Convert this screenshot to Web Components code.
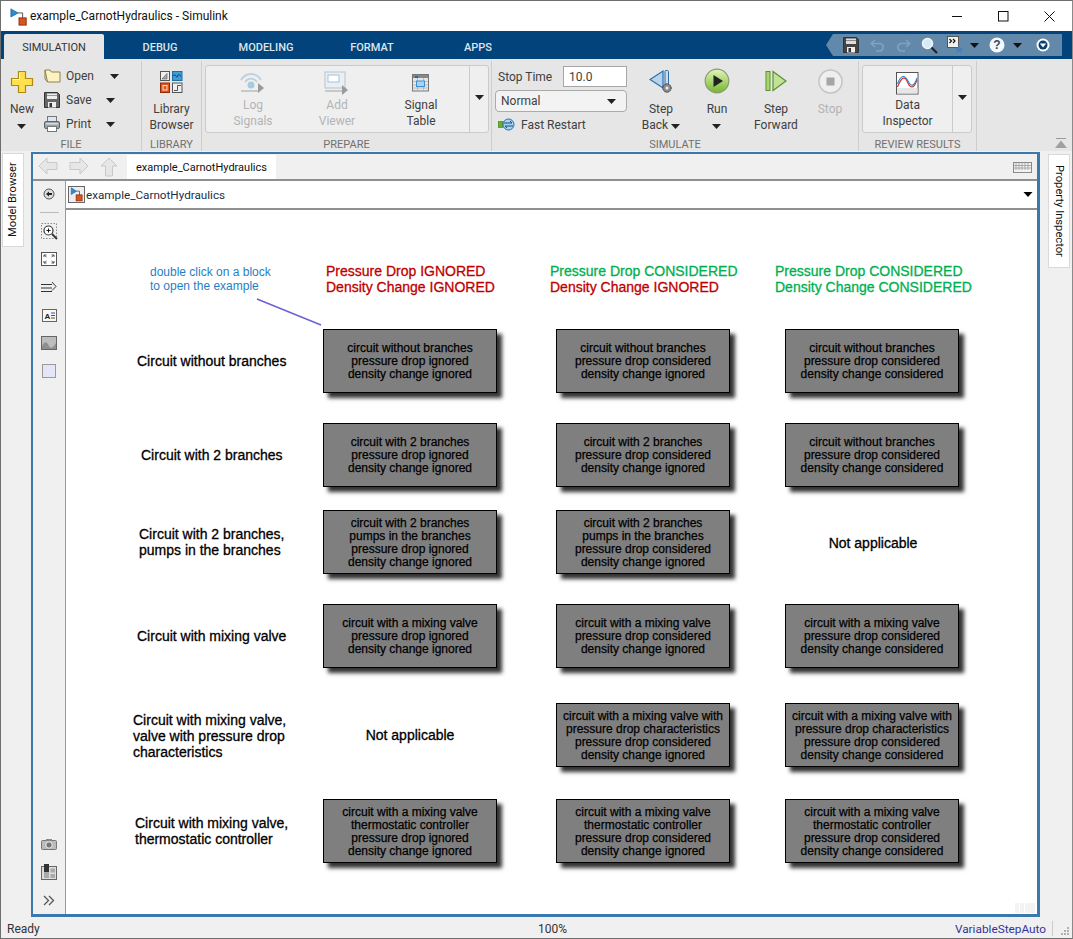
<!DOCTYPE html>
<html>
<head>
<meta charset="utf-8">
<title>example_CarnotHydraulics - Simulink</title>
<style>
  html, body { margin: 0; padding: 0; background: #f0f0f0; }
  body { font-family: Roboto, "Open Sans", sans-serif; }
</style>
</head>
<body>
<sl-window></sl-window>

<script>
const CARET = /* html */`<svg width="9" height="5" viewBox="0 0 9 5"><path d="M0 0h9L4.500 5z" fill="#222"/></svg>`;

const MODEL_ICON = /* html */`<svg width="20" height="20" viewBox="0 0 20 20">
  <path d="M3 1v9l7-4.500z" fill="#2b8bd0" stroke="#14639f" stroke-width=".8"/>
  <path d="M10 5.500h4V11" fill="none" stroke="#444"/>
  <rect x="9.500" y="10.500" width="8" height="8" fill="#d9531e" stroke="#8c2c08"/>
</svg>`;

const ICONS = {
  plus: `<svg width="24" height="24" viewBox="0 0 24 24"><path d="M8.500 1.500h7v7h7v7h-7v7h-7v-7h-7v-7h7z" fill="#ffe04d" stroke="#b08a10" stroke-width="1.200"/><path d="M9.500 3v6.500H3" fill="none" stroke="#fff6b8"/></svg>`,
  open: `<svg width="17" height="14" viewBox="0 0 17 14"><path d="M1 1h5l1.500 2H16v10H3.500z" fill="#fdf3c0" stroke="#8b8150"/><path d="M1 1v9l2.500 3" fill="none" stroke="#8b8150"/></svg>`,
  save: `<svg width="16" height="16" viewBox="0 0 16 16"><path d="M.5.500h13l2 2v13H.5z" fill="#666" stroke="#333"/><rect x="3" y="1.500" width="10" height="5.500" fill="#eee"/><rect x="3" y="3" width="10" height="1" fill="#999"/><rect x="4" y="10" width="8" height="5.500" fill="#eee"/><rect x="5.500" y="11" width="2.500" height="4" fill="#333"/></svg>`,
  print: `<svg width="16" height="16" viewBox="0 0 16 16"><rect x="3.500" y=".5" width="9" height="6" fill="#dfe6ee" stroke="#777"/><rect x=".5" y="5.500" width="15" height="7" rx="1.500" fill="#9aa4ad" stroke="#5c6670"/><rect x="3.500" y="10.500" width="9" height="5" fill="#fff" stroke="#777"/><rect x="2" y="7" width="12" height="1.500" fill="#d8dde2"/></svg>`,
  library: `<svg width="23" height="22" viewBox="0 0 23 22"><rect x=".5" y=".5" width="9" height="9" fill="#eee" stroke="#555"/><path d="M2 8l5-5.500v5.500z" fill="#aaa" stroke="#555" stroke-width=".6"/><rect x="12.500" y=".5" width="9.500" height="9" fill="#3d9cd8" stroke="#1c6ea6"/><path d="M13.500 5c1.500-4 3 3.500 4.200 0s2 0 3.300 0" fill="none" stroke="#0c3f66"/><rect x=".5" y="12" width="9" height="9.500" fill="#e2551e" stroke="#8c2c08"/><rect x="3" y="14.500" width="4" height="4.500" fill="none" stroke="#fbd9c8"/><rect x="12.500" y="12" width="9.500" height="9.500" fill="#eee" stroke="#555"/><path d="M14 19.500h3.500v-5H21" fill="none" stroke="#555"/></svg>`,
  log: `<svg width="26" height="24" viewBox="0 0 26 24"><g fill="none" stroke="#bcd2e0" stroke-width="1.800"><path d="M1 9c5-8 15-8 20 0"/><path d="M5 11c3-4.500 9-4.500 12 0"/></g><circle cx="11" cy="14" r="3.500" fill="#a9cbe2"/><path d="M1 20h18" stroke="#bbb" stroke-width="1.500"/><path d="M18 15v10l6-5z" transform="translate(0 -3)" fill="#9a9a9a"/></svg>`,
  viewer: `<svg width="26" height="24" viewBox="0 0 26 24"><rect x="1" y="1" width="20" height="16" fill="#e9eff4" stroke="#b5c3cf"/><rect x="4" y="4" width="11" height="7" fill="#fff" stroke="#a4c2d8"/><path d="M1 20h18" stroke="#bbb" stroke-width="1.500"/><path d="M18 14v10l6-5z" fill="#9a9a9a"/></svg>`,
  table: `<svg width="18" height="18" viewBox="0 0 18 18"><rect x=".5" y=".5" width="16" height="16.500" fill="#e6e6e6" stroke="#777"/><rect x="1" y="1" width="15" height="3" fill="#888"/><rect x="3" y="2" width="3" height="2" fill="#1769c4"/><path d="M1 7.500h15M1 11h15M1 14h15M5.500 4v13M11.500 4v13" stroke="#aaa" stroke-width=".7"/><rect x="4.500" y="7" width="8" height="5.500" fill="#a9d3f2" stroke="#3f8fd0"/></svg>`,
  back: `<svg width="24" height="24" viewBox="0 0 24 24"><path d="M14 2v17L1 10.500z" fill="#b3d3ee" stroke="#2e6da4" stroke-width="1.200"/><rect x="16" y="1.500" width="3.500" height="14" rx="1" fill="#c8dff2" stroke="#2e6da4"/><circle cx="18" cy="19" r="4.200" fill="#8c8c8c" stroke="#333" stroke-dasharray="1.500 .7"/><circle cx="18" cy="19" r="1.500" fill="#eee"/></svg>`,
  run: `<svg width="26" height="26" viewBox="0 0 26 26"><defs><linearGradient id="g" x1="0" y1="0" x2="0" y2="1"><stop offset="0" stop-color="#e4f5b8"/><stop offset="1" stop-color="#74b62f"/></linearGradient></defs><circle cx="13" cy="13" r="11.800" fill="url(#g)" stroke="#8a9b72" stroke-width="1.200"/><path d="M9.500 7v12l9.500-6z" fill="#222"/></svg>`,
  forward: `<svg width="22" height="22" viewBox="0 0 22 22"><rect x="1" y="1.500" width="4" height="19" fill="#a7d66c" stroke="#5f8f35"/><path d="M8 1.500v19L21 11z" fill="#c0e494" stroke="#5f8f35" stroke-width="1.200"/></svg>`,
  stop: `<svg width="25" height="25" viewBox="0 0 25 25"><circle cx="12.500" cy="12.500" r="11.500" fill="#efefef" stroke="#c4c4c4" stroke-width="1.500"/><rect x="8.500" y="8.500" width="8" height="8" fill="#a6a6a6"/></svg>`,
  inspector: `<svg width="23" height="23" viewBox="0 0 23 23"><rect x=".5" y=".5" width="21.500" height="21.500" fill="#fff" stroke="#555"/><rect x="1" y="16" width="20.500" height="5.500" fill="#e6e6e6"/><path d="M1.500 15C6 4 9 4 11.500 10s6 8 9.500-2" fill="none" stroke="#c6312b" stroke-width="1.100"/><path d="M1.500 12C5 2 9 3 12 9s6 6 9-3" fill="none" stroke="#2e7fd0" stroke-width="1.100"/></svg>`,
  restart: `<svg width="17" height="13" viewBox="0 0 17 13"><rect x="0" y="3.500" width="5" height="6" fill="#6aaa3b" stroke="#3f7a20" stroke-width=".6"/><circle cx="10.500" cy="6.500" r="5.500" fill="#a9d3f2" stroke="#1f6ea8"/><path d="M6 5h8l-2-2M15 8H7l2 2" fill="none" stroke="#0f4f80"/></svg>`
};

const btn = (icon, text, style, disabled) =>
  `<sl-ribbon-button ${disabled ? "disabled" : ""} style="${style}"><span slot="icon">${icon}</span>${text}</sl-ribbon-button>`;

const BIG = "--w:56px;--icon-h:26px;--icon-gap:5px;margin-top:9px";
const TOP = "--icon-h:24px;--icon-gap:0;";

class SlWindow extends HTMLElement {
  constructor() {
    super();
    this.attachShadow({ mode: "open" });
    this.shadowRoot.innerHTML = /* html */`
      <style>
        :host {
          display: flex;
          flex-direction: column;
          width: 1073px;
          height: 939px;
          box-sizing: border-box;
          border: 1px solid #6e6e6e;
          border-right-color: #8a8a8a;
          background: #f0f0f0;
          overflow: hidden;
        }
        .middle { flex: 1; display: flex; min-height: 0; }
      </style>
      <sl-titlebar></sl-titlebar>
      <sl-tabstrip></sl-tabstrip>
      <sl-ribbon></sl-ribbon>
      <div class="middle">
        <sl-sidetab side="left">Model Browser</sl-sidetab>
        <sl-editor></sl-editor>
        <sl-sidetab side="right">Property Inspector</sl-sidetab>
      </div>
      <sl-statusbar></sl-statusbar>`;
  }
}

class SlTitlebar extends HTMLElement {
  constructor() {
    super();
    this.attachShadow({ mode: "open" });
    this.shadowRoot.innerHTML = /* html */`
      <style>
        :host {
          display: flex;
          align-items: center;
          height: 30px;
          background: #fff;
          padding-left: 9px;
          font-size: 12px;
          color: #111;
        }
        svg.logo { margin-right: 2px; margin-top: 1px; }
        .name { flex: 1; }
        .ctl { width: 46px; height: 30px; display: flex; align-items: center; justify-content: center; }
      </style>
      <svg class="logo" width="18" height="18" viewBox="0 0 20 20">
        <path d="M1 1v9l8-4.500z" fill="#2b8bd0" stroke="#14639f" stroke-width=".8"/>
        <path d="M9 5.500h5V11" fill="none" stroke="#444"/>
        <rect x="10" y="11" width="8" height="8" fill="#d9531e" stroke="#8c2c08"/>
      </svg>
      <span class="name">example_CarnotHydraulics - Simulink</span>
      <div class="ctl"><svg width="11" height="11"><path d="M0 5.500h10" stroke="#111"/></svg></div>
      <div class="ctl"><svg width="11" height="11"><rect x=".5" y=".5" width="9.500" height="9.500" fill="none" stroke="#111"/></svg></div>
      <div class="ctl"><svg width="11" height="11"><path d="M.5.500l10 10M10.500.5l-10 10" stroke="#111"/></svg></div>`;
  }
}

class SlTabstrip extends HTMLElement {
  constructor() {
    super();
    this.attachShadow({ mode: "open" });
    this.shadowRoot.innerHTML = /* html */`
      <style>
        :host {
          display: flex;
          height: 28px;
          background: #01437a;
          padding-left: 3px;
          font-size: 11px;
          font-weight: 500;
          color: #dce6ef;
        }
        .tab { display: flex; align-items: center; justify-content: center; margin-top: 3px; width: 112px; padding-top: 1px; box-sizing: border-box; }
        .tab.on { width: 100px; background: #e6e6e6; color: #333; border-radius: 2px 2px 0 0; font-weight: 400; }
        .tab.mod { width: 100px; }
        .quick {
          margin: 3px 10px 3px auto;
          width: 236px;
          background: #6288aa;
          clip-path: polygon(7px 0, 100% 0, 100% 100%, 7px 100%, 0 50%);
          display: flex;
          align-items: center;
          padding-left: 17px;
          box-sizing: border-box;
        }
        .quick > * { flex: none; }
        .quick span { line-height: 0; }
      </style>
      <div class="tab on">SIMULATION</div>
      <div class="tab">DEBUG</div>
      <div class="tab mod">MODELING</div>
      <div class="tab">FORMAT</div>
      <div class="tab mod">APPS</div>
      <div class="quick">
        <svg width="16" height="16" viewBox="0 0 16 16"><path d="M.5.500h13l2 2v13H.5z" fill="#444" stroke="#333"/><rect x="3" y="1.500" width="10" height="5.500" fill="#ddd"/><rect x="3" y="3" width="10" height="1" fill="#888"/><rect x="4" y="10" width="8" height="5.500" fill="#eee"/><rect x="5.500" y="11" width="2.500" height="4" fill="#333"/></svg>
        <svg style="margin-left:11px" width="15" height="13" viewBox="0 0 15 13"><path d="M5 1L1 4.500 5 8M1 4.500h9a3.800 3.800 0 0 1 0 7.500H6" fill="none" stroke="#83a2bd" stroke-width="1.500"/></svg>
        <svg style="margin-left:11px" width="15" height="13" viewBox="0 0 15 13"><path d="M10 1l4 3.500L10 8M14 4.500H5a3.800 3.800 0 0 0 0 7.500h4" fill="none" stroke="#83a2bd" stroke-width="1.500"/></svg>
        <svg style="margin-left:10px" width="17" height="17" viewBox="0 0 17 17"><circle cx="6.500" cy="6.500" r="5" fill="#d6e9f7" stroke="#f4f4f4" stroke-width="1.500"/><path d="M10.500 10.500l5.500 5.500" stroke="#222" stroke-width="2.200"/></svg>
        <svg style="margin-left:9px" width="17" height="18" viewBox="0 0 17 18"><rect x=".5" y=".5" width="11" height="11" fill="#f1f1f1" stroke="#555"/><path d="M2.500 3l2 2-2 2M6 3l2 2-2 2" fill="none" stroke="#111" stroke-width="1.200"/><path d="M12 9l1.300 2.800 3 .4-2.200 2 .6 3-2.700-1.500L9.300 17l.6-3-2.200-2 3-.4z" fill="#4a7fb5"/></svg>
        <span style="margin-left:6px">${CARET.replace("#222", "#111")}</span>
        <svg style="margin-left:10px" width="16" height="16" viewBox="0 0 16 16"><circle cx="8" cy="8" r="7.500" fill="#f4f8fb"/><text x="8" y="12" font-size="12" font-weight="700" font-family="Liberation Sans" text-anchor="middle" fill="#2d4a66">?</text></svg>
        <span style="margin-left:8px">${CARET.replace("#222", "#111")}</span>
        <svg style="margin-left:14px" width="14" height="14" viewBox="0 0 14 14"><circle cx="7" cy="7" r="6.500" fill="#fff"/><circle cx="7" cy="7" r="4.500" fill="#0d3f6e"/><path d="M3.800 5.500h6.400L7 9.500z" fill="#fff"/></svg>
      </div>`;
  }
}

// large ribbon button: icon on top, label lines under it
class SlRibbonButton extends HTMLElement {
  constructor() {
    super();
    this.attachShadow({ mode: "open" });
    this.shadowRoot.innerHTML = /* html */`
      <style>
        :host {
          display: flex;
          flex-direction: column;
          align-items: center;
          width: var(--w, 56px);
          font-size: 12px;
          line-height: 16px;
          color: #404040;
          text-align: center;
        }
        :host([disabled]) { color: #b4b4b4; }
        .icon { height: var(--icon-h, 26px); display: flex; align-items: center; justify-content: center; margin-bottom: var(--icon-gap, 6px); }
        .t { white-space: pre-line; }
      </style>
      <div class="icon"><slot name="icon"></slot></div>
      <div class="t"><slot></slot></div>`;
  }
}

class SlRibbonSection extends HTMLElement {
  constructor() {
    super();
    this.attachShadow({ mode: "open" });
    this.shadowRoot.innerHTML = /* html */`
      <style>
        :host {
          display: flex;
          flex-direction: column;
          box-sizing: border-box;
          width: var(--w);
          border-right: 1px solid #cdcdcd;
          margin: 2px 0 0;
        }
        .body { height: 76px; display: flex; }
        .cap { height: 14px; line-height: 15px; text-align: center; font-size: 11px; color: #707070; }
      </style>
      <div class="body"><slot></slot></div>
      <div class="cap"></div>`;
  }
  connectedCallback() {
    this.shadowRoot.querySelector(".cap").textContent = this.getAttribute("caption");
  }
}

class SlRibbon extends HTMLElement {
  constructor() {
    super();
    this.attachShadow({ mode: "open" });
    this.shadowRoot.innerHTML = /* html */`
      <style>
        :host {
          display: flex;
          height: 92px;
          background: #e6e6e6;
          font-size: 12px;
          color: #404040;
          position: relative;
        }
        .file-rows { display: flex; flex-direction: column; padding-top: 3px; margin-left: 1px; }
        .row { display: flex; align-items: center; height: 24px; }
        .row span { width: 40px; margin-left: 6px; }
        .row span.open { width: 44px; margin-left: 5px; }
        .group {
          margin: 4px 0 0 3px;
          height: 68px;
          box-sizing: border-box;
          display: flex;
          background: #efefef;
          border: 1px solid #cbcbcb;
          border-radius: 3px;
        }
        .more {
          border-left: 1px solid #cbcbcb;
          margin: -7px 0 0 auto;
          width: 19px;
          display: flex;
          align-items: center;
          justify-content: center;
          padding-bottom: 3px;
          box-sizing: border-box;
        }
        .sim-left { width: 132px; margin: 3px 7px 0 3px; display: flex; flex-direction: column; }
        .stop-row { display: flex; align-items: center; justify-content: space-between; height: 22px; padding-left: 3px; margin-top: 1px; }
        .stop-row span, .fast span { padding-top: 2px; }
        .stop-row b {
          font-weight: 400;
          width: 64px;
          height: 21px;
          box-sizing: border-box;
          border: 1px solid #a6a6a6;
          background: #fff;
          padding-left: 5px;
          line-height: 20px;
        }
        .select {
          height: 22px;
          box-sizing: border-box;
          margin-top: 3px;
          border: 1px solid #ababab;
          border-radius: 4px;
          background: #f3f3f3;
          display: flex;
          align-items: center;
          justify-content: space-between;
          padding: 0 10px 0 5px;
        }
        .fast { display: flex; align-items: center; gap: 6px; height: 24px; padding-left: 3px; }
        .collapse { position: absolute; right: 5px; bottom: 2px; line-height: 0; }
      </style>

      <sl-ribbon-section caption="FILE" style="--w:141px">
        ${btn(ICONS.plus, `New\n${CARET}`, "--w:42px;--icon-h:24px;--icon-gap:5px;margin-top:11px")}
        <div class="file-rows">
          <div class="row">${ICONS.open}<span class="open">Open</span>${CARET}</div>
          <div class="row">${ICONS.save}<span>Save</span>${CARET}</div>
          <div class="row">${ICONS.print}<span>Print</span>${CARET}</div>
        </div>
      </sl-ribbon-section>

      <sl-ribbon-section caption="LIBRARY" style="--w:60px">
        ${btn(ICONS.library, "Library\nBrowser", "--w:59px;--icon-h:24px;--icon-gap:5px;margin-top:11px")}
      </sl-ribbon-section>

      <sl-ribbon-section caption="PREPARE" style="--w:290px">
        <div class="group" style="width:284px;padding:7px 0 0 5px">
          ${btn(ICONS.log, "Log\nSignals", TOP + "--w:84px", true)}
          ${btn(ICONS.viewer, "Add\nViewer", TOP + "--w:84px", true)}
          ${btn(ICONS.table, "Signal\nTable", TOP + "--w:84px")}
          <div class="more">${CARET}</div>
        </div>
      </sl-ribbon-section>

      <sl-ribbon-section caption="SIMULATE" style="--w:367px">
        <div class="sim-left">
          <div class="stop-row"><span>Stop Time</span><b>10.0</b></div>
          <div class="select">Normal${CARET}</div>
          <div class="fast">${ICONS.restart}<span>Fast Restart</span></div>
        </div>
        ${btn(ICONS.back, `Step\nBack ${CARET}`, BIG + ";margin-left:-1px")}
        ${btn(ICONS.run, `Run\n${CARET}`, BIG)}
        ${btn(ICONS.forward, "Step\nForward", BIG + ";--w:62px")}
        ${btn(ICONS.stop, "Stop", BIG + ";--w:46px", true)}
      </sl-ribbon-section>

      <sl-ribbon-section caption="REVIEW RESULTS" style="--w:118px">
        <div class="group" style="width:110px;padding-top:7px">
          ${btn(ICONS.inspector, "Data\nInspector", TOP + "--w:90px")}
          <div class="more">${CARET}</div>
        </div>
      </sl-ribbon-section>

      <svg class="collapse" width="12" height="11" viewBox="0 0 12 11"><path d="M1 .5h10" stroke="#999"/><path d="M6 2.500L12 10H0z" fill="#a0a0a0"/></svg>`;
  }
}

class SlSidetab extends HTMLElement {
  constructor() {
    super();
    this.attachShadow({ mode: "open" });
    this.shadowRoot.innerHTML = /* html */`
      <style>
        :host { display: block; width: 30px; flex: none; background: #f0f0f0; font-size: 11.200px; color: #111; }
        :host([side="right"]) { width: 32px; }
        .t {
          background: #fff;
          border: 1px solid #d9d9d9;
          writing-mode: vertical-rl;
          box-sizing: border-box;
          margin: 2px 0 0 1px;
          width: 22px;
          height: 94px;
          display: flex;
          align-items: center;
          justify-content: center;
          white-space: nowrap;
          line-height: 20px;
        }
        :host([side="left"]) .t { transform: rotate(180deg); }
        :host([side="right"]) .t { margin: 3px 0 0 8px; height: 114px; }
      </style>
      <div class="t"><slot></slot></div>`;
  }
}

class SlEditor extends HTMLElement {
  constructor() {
    super();
    this.attachShadow({ mode: "open" });
    this.shadowRoot.innerHTML = /* html */`
      <style>
        :host {
          display: flex;
          flex-direction: column;
          flex: none;
          width: 1009px;
          margin: 1px 0 0;
          box-sizing: border-box;
          height: 765px;
          border: 2px solid #3b78ad;
          border-bottom-width: 3px;
          border-right-width: 3px;
          background: #f0f0f0;
        }
        .tabs {
          display: flex;
          align-items: flex-end;
          height: 25px;
          padding-left: 5px;
          flex: none;
          border-bottom: 2px solid #8f8f8f;
        }
        .navs { display: flex; gap: 11px; width: 89px; align-self: center; }
        .tab { width: 149px; height: 24px; background: #fff; font-size: 11px; color: #111; display: flex; align-items: center; justify-content: center; }
        .kbd { margin: 0 5px 6px auto; }
        .body { flex: 1; display: flex; min-height: 0; }
        .tools {
          width: 33px;
          flex: none;
          border-right: 1px solid #9a9a9a;
          box-sizing: border-box;
          display: flex;
          flex-direction: column;
          align-items: center;
          padding-top: 7px;
        }
        .tools hr { width: 19px; flex: none; border: 0; border-top: 1px solid #bbb; margin: 12px 0 4px; }
        .tools .c { height: 28px; flex: none; display: flex; align-items: center; justify-content: center; }
        .tools .spacer { flex: 1; }
        .main { flex: 1; display: flex; flex-direction: column; min-width: 0; }
        .addr {
          height: 27px;
          flex: none;
          background: #fff;
          border-bottom: 2px solid #8f8f8f;
          display: flex;
          align-items: center;
          padding: 0 4px 0 2px;
          font-size: 11.700px;
          color: #1d2f47;
          gap: 1px;
        }
        .addr .ic { width: 15px; height: 15px; border: 1px solid #666; background: #eee; line-height: 0; overflow: hidden; }
        .addr .ic svg { width: 15px; height: 15px; }
        .addr .cr { margin-left: auto; line-height: 0; }
      </style>
      <div class="tabs">
        <div class="navs">
          <svg width="20" height="18" viewBox="0 0 20 18"><path d="M1 9l8-8v4.500h10v7H9V17z" fill="#e6e6e6" stroke="#c9c9c9"/></svg>
          <svg width="20" height="18" viewBox="0 0 20 18"><path d="M19 9l-8-8v4.500H1v7h10V17z" fill="#e6e6e6" stroke="#c9c9c9"/></svg>
          <svg width="18" height="20" viewBox="0 0 18 20"><path d="M9 1l8 8h-4.500v10h-7V9H1z" fill="#e6e6e6" stroke="#c9c9c9"/></svg>
        </div>
        <div class="tab">example_CarnotHydraulics</div>
        <svg class="kbd" width="19" height="11" viewBox="0 0 19 11"><rect x=".5" y=".5" width="18" height="10" fill="#f2f2f2" stroke="#8a8a8a"/><path d="M1 3.500h17M1 6h17M3 1v7M6 1v7M9 1v7M12 1v7M15 1v7" stroke="#9a9a9a" stroke-width=".8"/></svg>
      </div>
      <div class="body">
        <div class="tools">
          <svg width="12" height="12" viewBox="0 0 12 12" style="flex:none"><circle cx="6" cy="6" r="5" fill="#ddd" stroke="#555"/><path d="M3 6l3-2.500V5h3v2H6v1.500z" fill="#222"/></svg>
          <hr>
          <div class="c"><svg width="17" height="17" viewBox="0 0 17 17"><rect x=".5" y=".5" width="15" height="15" fill="none" stroke="#888" stroke-dasharray="1.500 1.500"/><circle cx="7.500" cy="7.500" r="4.500" fill="#fff" stroke="#333" stroke-width="1.200"/><path d="M5.500 7.500h4M7.500 5.500v4" stroke="#111"/><path d="M11 11l5 5" stroke="#333" stroke-width="1.800"/></svg></div>
          <div class="c"><svg width="16" height="14" viewBox="0 0 16 14"><rect x=".5" y=".5" width="15" height="13" fill="#fff" stroke="#555"/><path d="M3 5V3h2.500M13 5V3h-2.500M3 9v2h2.500M13 9v2h-2.500M3 3l2.500 2M13 3l-2.500 2M3 11l2.500-2M13 11l-2.500-2" fill="none" stroke="#555"/></svg></div>
          <div class="c"><svg width="16" height="12" viewBox="0 0 16 12"><path d="M0 3.500h11M0 7h11M0 10.500h11" stroke="#333"/><path d="M11 1l4 4.500-4 4" fill="none" stroke="#333"/></svg></div>
          <div class="c"><svg width="15" height="13" viewBox="0 0 15 13"><rect x=".5" y=".5" width="14" height="12" fill="#f7f7f7" stroke="#666"/><text x="2.500" y="9.500" font-size="8" font-weight="700" font-family="Liberation Sans" fill="#222">A</text><path d="M9 4h4M9 6.500h4M9 9h4" stroke="#555"/></svg></div>
          <div class="c"><svg width="16" height="14" viewBox="0 0 16 14"><rect x=".5" y=".5" width="15" height="13" fill="#bdbdbd" stroke="#666"/><path d="M1 10c3-6 5-4 7 0s5 0 7-3v6H1z" fill="#8f8f8f"/></svg></div>
          <div class="c"><svg width="14" height="14" viewBox="0 0 14 14"><rect x=".5" y=".5" width="13" height="13" fill="#e4e6f8" stroke="#9a9a9a"/></svg></div>
          <div class="spacer"></div>
          <div class="c"><svg width="16" height="12" viewBox="0 0 16 12"><rect x=".5" y="2.500" width="15" height="9" rx="1" fill="#bbb" stroke="#777"/><rect x="5" y="1" width="6" height="2" fill="#888"/><circle cx="8" cy="7" r="3.200" fill="#777" stroke="#eee"/></svg></div>
          <div class="c"><svg width="16" height="16" viewBox="0 0 16 16"><rect x=".5" y="2.500" width="15" height="13" fill="#ddd" stroke="#666"/><rect x="3" y="0" width="5" height="8" fill="#333"/><rect x="3" y="8" width="5" height="6" fill="#aaa"/><rect x="9.500" y="4.500" width="4.500" height="4" fill="#aaa"/><rect x="9.500" y="10" width="4.500" height="4" fill="#aaa"/></svg></div>
          <div class="c"><svg width="12" height="11" viewBox="0 0 12 11"><path d="M1 1l4.500 4.500L1 10M6 1l4.500 4.500L6 10" fill="none" stroke="#555" stroke-width="1.300"/></svg></div>
        </div>
        <div class="main">
          <div class="addr">
            <span class="ic">${MODEL_ICON}</span>
            <span>example_CarnotHydraulics</span>
            <span class="cr">${CARET.replace('width="9"', 'width="10"').replace("#222", "#000")}</span>
          </div>
          <sl-canvas></sl-canvas>
        </div>
      </div>`;
  }
}

// subsystem block on the model canvas, x/y are page coordinates
class SlBlock extends HTMLElement {
  constructor() {
    super();
    this.attachShadow({ mode: "open" });
    this.shadowRoot.innerHTML = /* html */`
      <style>
        :host {
          position: absolute;
          display: flex;
          align-items: center;
          justify-content: center;
          box-sizing: border-box;
          width: 174px;
          height: 64px;
          background: #7f7f7f;
          border: 1px solid #000;
          box-shadow: 5px 5px 4px #333;
          font: 12px/13px "Liberation Sans", Arial, sans-serif;
          -webkit-text-stroke: .25px #000;
          color: #000;
          text-align: center;
        }
        :host([four]) div { padding-top: 2px; }
        div { white-space: pre-line; }
      </style>
      <div><slot></slot></div>`;
  }
  connectedCallback() {
    this.style.left = (+this.getAttribute("x") - 66) + "px";
    this.style.top = (+this.getAttribute("y") - 210) + "px";
  }
}

// free text annotation on the model canvas
class SlNote extends HTMLElement {
  constructor() {
    super();
    this.attachShadow({ mode: "open" });
    this.shadowRoot.innerHTML = /* html */`
      <style>
        :host {
          position: absolute;
          display: block;
          font: 14px/15.800px "Liberation Sans", Arial, sans-serif;
          -webkit-text-stroke: .3px currentColor;
          color: #000;
        }
        :host([center]) { transform: translateX(-50%); }
        div { white-space: pre; }
      </style>
      <div><slot></slot></div>`;
  }
  connectedCallback() {
    this.style.left = (+this.getAttribute("x") - 66) + "px";
    this.style.top = (+this.getAttribute("y") - 210) + "px";
  }
}

const CONSIDERED = "pressure drop considered";
const IGNORED = "pressure drop ignored";
const D_IGN = "density change ignored";
const D_CON = "density change considered";
const COLS = [323, 556, 785];
const ROWS = [329, 423, 510, 604, 703, 799];
const BLOCKS = [
  ["circuit without branches", "circuit without branches", "circuit without branches"],
  ["circuit with 2 branches", "circuit with 2 branches", "circuit without branches"],
  ["circuit with 2 branches\npumps in the branches", "circuit with 2 branches\npumps in the branches", null],
  ["circuit with a mixing valve", "circuit with a mixing valve", "circuit with a mixing valve"],
  [null, "circuit with a mixing valve with\npressure drop characteristics", "circuit with a mixing valve with\npressure drop characteristics"],
  ["circuit with a mixing valve\nthermostatic controller", "circuit with a mixing valve\nthermostatic controller", "circuit with a mixing valve\nthermostatic controller"]
];
const SUFFIX = [`${IGNORED}\n${D_IGN}`, `${CONSIDERED}\n${D_IGN}`, `${CONSIDERED}\n${D_CON}`];
const LABELS = [
  [137, 354, "Circuit without branches"],
  [141, 448, "Circuit with 2 branches"],
  [139, 527, "Circuit with 2 branches,\npumps in the branches"],
  [137, 629, "Circuit with mixing valve"],
  [133, 713, "Circuit with mixing valve,\nvalve with pressure drop\ncharacteristics"],
  [135, 816, "Circuit with mixing valve,\nthermostatic controller"]
];

class SlCanvas extends HTMLElement {
  constructor() {
    super();
    this.attachShadow({ mode: "open" });
    const blocks = BLOCKS.map((row, r) => row.map((name, c) =>
      name ? `<sl-block ${name.includes("\n") ? "four" : ""} x="${COLS[c]}" y="${ROWS[r]}">${name}\n${SUFFIX[c]}</sl-block>` : ""
    ).join("")).join("");
    const labels = LABELS.map(([x, y, t]) => `<sl-note x="${x}" y="${y}">${t}</sl-note>`).join("");
    this.shadowRoot.innerHTML = /* html */`
      <style>
        :host { display: block; flex: 1; position: relative; background: #fff; overflow: hidden; }
        svg.link { position: absolute; left: 0; top: 0; }
        .corner { position: absolute; right: 2px; bottom: 1px; display: flex; gap: 1px; height: 10px; }
        .corner i { display: block; background: #f3f3f3; width: 4px; }
        .corner i:last-child { width: 10px; }
        .hint { font-size: 12px; line-height: 14px; -webkit-text-stroke: 0; color: #1f7fc4; }
        .red { color: #c00000; }
        .green { color: #00b050; }
      </style>
      <sl-note class="hint" x="150" y="265">double click on a block
to open the example</sl-note>
      <svg class="link" width="400" height="140"><path d="M191 89L255 115" stroke="#6a62d2" stroke-width="1.500"/></svg>
      <sl-note x="326" y="264"><span class="red">Pressure Drop IGNORED
Density Change IGNORED</span></sl-note>
      <sl-note x="550" y="264"><span class="green">Pressure Drop CONSIDERED</span>
<span class="red">Density Change IGNORED</span></sl-note>
      <sl-note x="775" y="264"><span class="green">Pressure Drop CONSIDERED
Density Change CONSIDERED</span></sl-note>
      ${labels}
      ${blocks}
      <sl-note center x="873" y="536">Not applicable</sl-note>
      <sl-note center x="410" y="728">Not applicable</sl-note>
      <div class="corner"><i></i><i></i><i></i></div>`;
  }
}

class SlStatusbar extends HTMLElement {
  constructor() {
    super();
    this.attachShadow({ mode: "open" });
    this.shadowRoot.innerHTML = /* html */`
      <style>
        :host {
          display: grid;
          grid-template-columns: 531px auto 1fr;
          align-items: center;
          height: 21px;
          box-sizing: border-box;
          padding: 2px 0 0 6px;
          flex: none;
          background: #f0f0f0;
          font-size: 12px;
          color: #333;
        }
        .r { display: flex; align-items: center; justify-content: flex-end; }
        .v { color: #33339c; margin-right: 6px; font-size: 11.800px; }
        .sep { width: 1px; height: 15px; background: #ccc; margin-right: 8px; }
        svg { margin-right: 2px; margin-top: 6px; }
      </style>
      <span>Ready</span>
      <span>100%</span>
      <div class="r">
        <span class="v">VariableStepAuto</span>
        <span class="sep"></span>
        <svg width="9" height="9" viewBox="0 0 9 9" fill="#b0b0b0"><rect x="6" y="0" width="2" height="2"/><rect x="3" y="3" width="2" height="2"/><rect x="6" y="3" width="2" height="2"/><rect x="0" y="6" width="2" height="2"/><rect x="3" y="6" width="2" height="2"/><rect x="6" y="6" width="2" height="2"/></svg>
      </div>`;
  }
}

customElements.define("sl-titlebar", SlTitlebar);
customElements.define("sl-tabstrip", SlTabstrip);
customElements.define("sl-ribbon-button", SlRibbonButton);
customElements.define("sl-ribbon-section", SlRibbonSection);
customElements.define("sl-ribbon", SlRibbon);
customElements.define("sl-sidetab", SlSidetab);
customElements.define("sl-block", SlBlock);
customElements.define("sl-note", SlNote);
customElements.define("sl-canvas", SlCanvas);
customElements.define("sl-editor", SlEditor);
customElements.define("sl-statusbar", SlStatusbar);
customElements.define("sl-window", SlWindow);
</script>
</body>
</html>
